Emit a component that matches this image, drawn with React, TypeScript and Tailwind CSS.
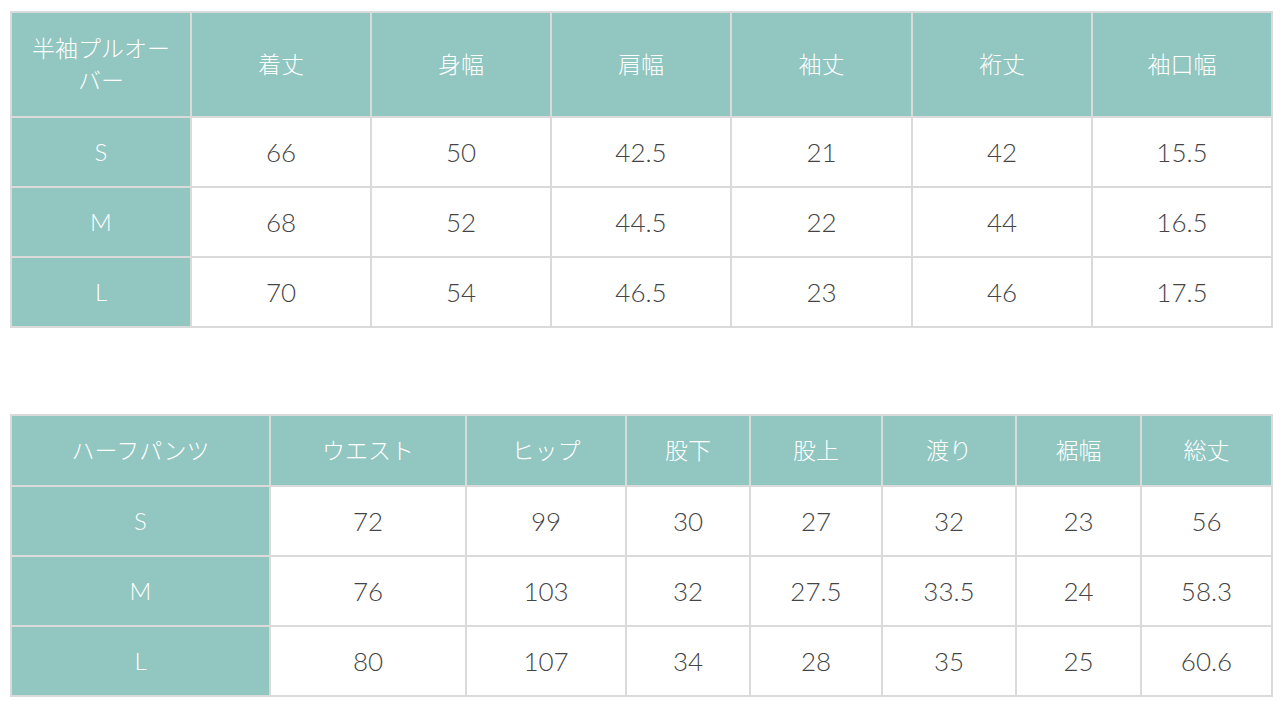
const font = {
  fontFamily: 'Lato, "Noto Sans CJK JP", sans-serif',
}

const tops = {
  head: ['半袖プルオーバー', '着丈', '身幅', '肩幅', '袖丈', '裄丈', '袖口幅'],
  widths: [180, 180, 180, 180, 181, 180, 180],
  rows: [
    ['S', '66', '50', '42.5', '21', '42', '15.5'],
    ['M', '68', '52', '44.5', '22', '44', '16.5'],
    ['L', '70', '54', '46.5', '23', '46', '17.5']
  ]
}

const pants = {
  head: ['ハーフパンツ', 'ウエスト', 'ヒップ', '股下', '股上', '渡り', '裾幅', '総丈'],
  widths: [259, 196, 160, 124, 132, 134, 125, 131],
  rows: [
    ['S', '72', '99', '30', '27', '32', '23', '56'],
    ['M', '76', '103', '32', '27.5', '33.5', '24', '58.3'],
    ['L', '80', '107', '34', '28', '35', '25', '60.6']
  ]
}

function SizeTable({
  head,
  widths,
  rows,
  headHeight
}: {
  head: string[]
  widths: number[]
  rows: string[][]
  headHeight: string
}) {
  return (
    <table className="w-full table-fixed border-collapse">
      <colgroup>
        {widths.map((w, i) => (
          <col key={i} style={{ width: w }} />
        ))}
      </colgroup>
      <thead>
        <tr className={headHeight}>
          {head.map(h => (
            <th
              key={h}
              className="border-2 border-[#dadada] bg-[#91c6c1] px-4 pb-[1px] text-center text-[23px] font-light leading-[32px] text-white"
            >
              {h}
            </th>
          ))}
        </tr>
      </thead>
      <tbody>
        {rows.map(row => (
          <tr key={row[0]} className="h-[70px]">
            {row.map((cell, i) =>
              i === 0 ? (
                <th
                  key={i}
                  className="border-2 border-[#dadada] bg-[#91c6c1] text-center text-[24px] font-light text-white"
                >
                  {cell}
                </th>
              ) : (
                <td
                  key={i}
                  className="border-2 border-[#dadada] bg-white text-center text-[26px] font-light text-[#444]"
                >
                  {cell}
                </td>
              )
            )}
          </tr>
        ))}
      </tbody>
    </table>
  )
}

export default function App() {
  return (
    <div className="min-h-[701px] bg-white px-[10px] pt-[11px]" style={font}>
      <div className="flex flex-col gap-[86px]">
        <SizeTable {...tops} headHeight="h-[105px]" />
        <SizeTable {...pants} headHeight="h-[71px]" />
      </div>
    </div>
  )
}
